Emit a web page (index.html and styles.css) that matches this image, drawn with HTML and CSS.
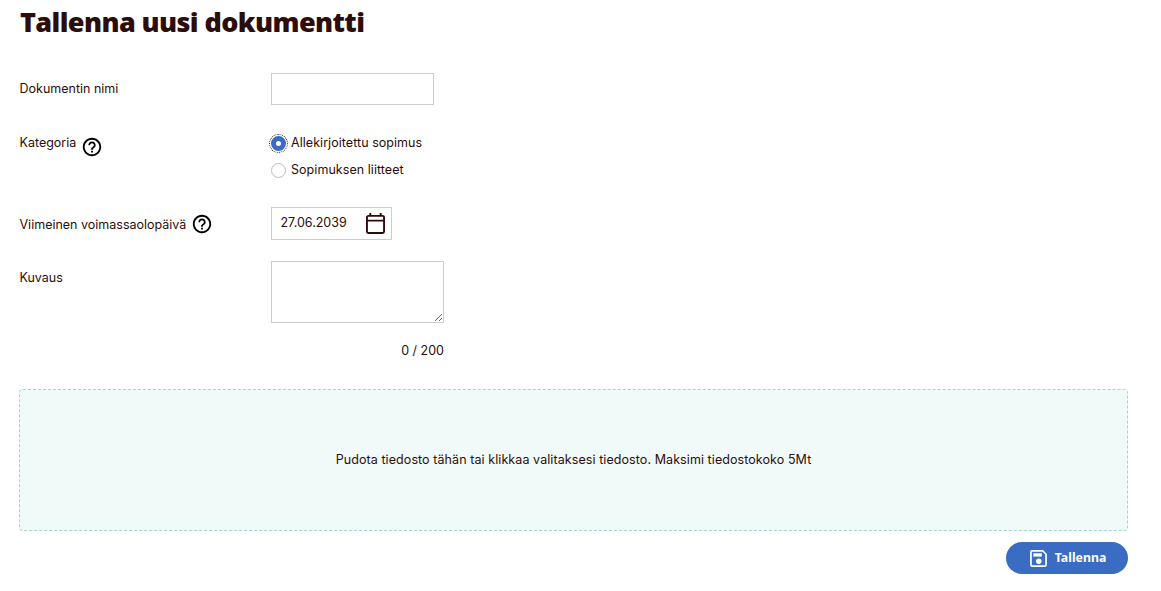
FILE: index.html
```html
<!DOCTYPE html>
<html lang="fi">
<head>
    <meta charset="UTF-8">
    <title>Tallenna uusi dokumentti</title>
    <link rel="stylesheet" href="styles.css">
</head>
<body>
  <h1>Tallenna uusi dokumentti</h1>
  <form>
    <div class="row row-name">
      <label class="label" for="name">Dokumentin nimi</label>
      <input class="text-input" type="text" id="name">
    </div>

    <div class="row row-category">
      <div class="label">
        <span>Kategoria</span>
        <svg class="help help-low" viewBox="0 0 24 24"><path d="M11 18h2v-2h-2v2zm1-16C6.48 2 2 6.48 2 12s4.480 10 10 10 10-4.480 10-10S17.520 2 12 2zm0 18c-4.410 0-8-3.590-8-8s3.590-8 8-8 8 3.590 8 8-3.590 8-8 8zm0-14c-2.210 0-4 1.790-4 4h2c0-1.100.9-2 2-2s2 .9 2 2c0 2-3 1.750-3 5h2c0-2.250 3-2.500 3-5 0-2.210-1.790-4-4-4z"/></svg>
      </div>
      <div class="options">
        <label class="option"><input class="radio focused" type="radio" name="category" checked><span>Allekirjoitettu sopimus</span></label>
        <label class="option"><input class="radio" type="radio" name="category"><span>Sopimuksen liitteet</span></label>
      </div>
    </div>

    <div class="row row-date">
      <div class="label">
        <span class="date-label">Viimeinen voimassaolopäivä</span>
        <svg class="help" viewBox="0 0 24 24"><path d="M11 18h2v-2h-2v2zm1-16C6.48 2 2 6.48 2 12s4.480 10 10 10 10-4.480 10-10S17.520 2 12 2zm0 18c-4.410 0-8-3.590-8-8s3.590-8 8-8 8 3.590 8 8-3.590 8-8 8zm0-14c-2.210 0-4 1.790-4 4h2c0-1.100.9-2 2-2s2 .9 2 2c0 2-3 1.750-3 5h2c0-2.250 3-2.500 3-5 0-2.210-1.790-4-4-4z"/></svg>
      </div>
      <div class="date-input">
        <span class="date">27.06.2039</span>
        <svg class="calendar" viewBox="0 0 20 22"><path d="M2.500 3h15a1.500 1.500 0 0 1 1.500 1.500v15a1.500 1.500 0 0 1-1.500 1.500h-15A1.500 1.500 0 0 1 1 19.500v-15A1.500 1.500 0 0 1 2.500 3zM1 8h18M4.500 0v3M15.500 0v3"/></svg>
      </div>
    </div>

    <div class="row row-description">
      <label class="label" for="description">Kuvaus</label>
      <div>
        <textarea id="description"></textarea>
        <div class="counter">0 / 200</div>
      </div>
    </div>

    <div class="dropzone">Pudota tiedosto tähän tai klikkaa valitaksesi tiedosto. Maksimi tiedostokoko 5Mt</div>

    <div class="actions">
      <button type="button">
        <svg class="save" viewBox="0 0 18 18"><path d="M2 1h11.500L17 4.500V16a1 1 0 0 1-1 1H2a1 1 0 0 1-1-1V2a1 1 0 0 1 1-1z"/><rect x="3.500" y="3.500" width="9" height="3.500"/><circle cx="9.300" cy="11.800" r="2.900"/></svg>
        <span>Tallenna</span>
      </button>
    </div>
  </form>
</body>
</html>
```
FILE: styles.css
```css
* {
  box-sizing: border-box;
}
body {
  margin: 0;
  padding: 4px 33px 0 19px;
  color: #2d0d0a;
  background-color: #fff;
  font-family: Inter, "Liberation Sans", sans-serif;
  font-size: 12.5px;
  line-height: 20px;
}
h1 {
  margin: 0 0 33px 1px;
  font-family: "Open Sans", "Noto Sans", sans-serif;
  font-size: 27px;
  font-weight: 800;
  line-height: 36px;
  letter-spacing: -0.6px;
}
.row {
  display: grid;
  grid-template-columns: 252px auto;
  justify-content: start;
  align-items: start;
}
.label {
  display: flex;
  padding-left: 0.5px;
}
.row-name {
  height: 60px;
}
.row-name .label {
  padding-top: 6px;
}
.text-input {
  width: 163px;
  height: 32px;
  border: 1px solid #ccc;
}
.row-category {
  height: 74px;
}
.help {
  width: 22px;
  height: 22px;
  margin-left: 5px;
  fill: #000;
}
.help-low {
  margin-top: 3px;
}
.option {
  display: flex;
  align-items: center;
  height: 27px;
}
.option span {
  margin-top: -2px;
  letter-spacing: 0.05px;
}
.options {
  margin-top: -3px;
}
.radio {
  appearance: none;
  width: 15px;
  height: 15px;
  margin: -1px 5px 0 0;
  border: 1px solid #bbb;
  border-radius: 50%;
  background-color: #fff;
}
.radio:checked {
  border: 5px solid #3a6cc3;
}
.focused {
  outline: 1px dotted #222;
  outline-offset: 1px;
}
.row-date {
  height: 54px;
}
.row-date .label {
  padding-top: 6px;
}
.date-label {
  padding-top: 2px;
}
.date-input {
  display: flex;
  justify-content: space-between;
  width: 121px;
  height: 33px;
  padding: 5px 6px 0 8.5px;
  border: 1px solid #ccc;
}
.calendar {
  width: 19px;
  height: 21px;
  fill: none;
  stroke: #2d0d0a;
  stroke-width: 2;
}
.row-description {
  height: 128px;
}
.row-description .label {
  padding-top: 7px;
}
textarea {
  display: block;
  width: 173px;
  height: 62px;
  border: 1px solid #ccc;
}
.counter {
  margin-top: 18px;
  text-align: right;
}
.dropzone {
  display: flex;
  align-items: center;
  justify-content: center;
  height: 142px;
  border: 1px dashed #a2d5cc;
  border-radius: 4px;
  background-color: #f0faf9;
  letter-spacing: 0.08px;
}
.actions {
  display: flex;
  justify-content: flex-end;
  margin-top: 11px;
}
button {
  display: flex;
  align-items: center;
  justify-content: center;
  gap: 8px;
  width: 122px;
  height: 32px;
  padding: 0 0 0 2px;
  border: 0;
  border-radius: 16px;
  color: #fff;
  background-color: #3a6cc3;
  font-family: "Noto Sans", sans-serif;
  font-size: 12.3px;
  font-weight: 700;
}
button span {
  margin-top: -2px;
}
.save {
  width: 17px;
  height: 17px;
  fill: none;
  stroke: #fff;
  stroke-width: 1.800;
}
.save rect, .save circle {
  fill: #fff;
  stroke: none;
}
```
